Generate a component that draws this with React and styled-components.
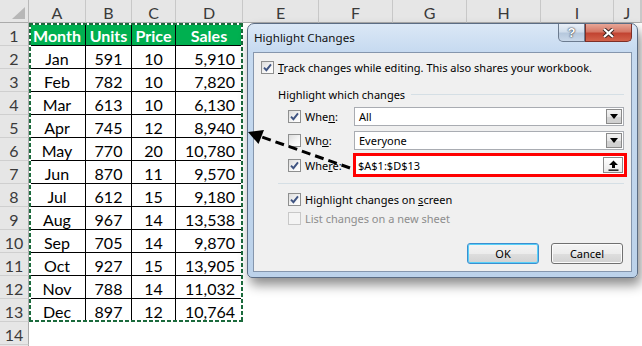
import React from "react";
import styled, { createGlobalStyle } from "styled-components";

const GlobalStyle = createGlobalStyle`
  html, body {
    margin: 0;
    padding: 0;
    background: #fff;
  }
  body {
    width: 642px;
    height: 346px;
    overflow: hidden;
    font-family: "Lato", "Liberation Sans", sans-serif;
  }
`;

const LETTERS = ["A", "B", "C", "D", "E", "F", "G", "H", "I", "J"];

const DATA = [
  ["Jan", "591", "10", "5,910"],
  ["Feb", "782", "10", "7,820"],
  ["Mar", "613", "10", "6,130"],
  ["Apr", "745", "12", "8,940"],
  ["May", "770", "20", "10,780"],
  ["Jun", "870", "11", "9,570"],
  ["Jul", "612", "15", "9,180"],
  ["Aug", "967", "14", "13,538"],
  ["Sep", "705", "14", "9,870"],
  ["Oct", "927", "15", "13,905"],
  ["Nov", "788", "14", "11,032"],
  ["Dec", "897", "12", "10,764"],
];

// ---------- spreadsheet ----------

const Sheet = styled.div`
  position: relative;
  display: grid;
  grid-template-columns: 29px 57px 46px 44px 67px 76px 74px 74px 74px 73px 1fr;
  grid-template-rows: repeat(16, 23px);
  width: 642px;
  height: 346px;
  overflow: hidden;
  background: #fff;
`;

const Corner = styled.div`
  grid-column: 1;
  grid-row: 1;
  display: flex;
  align-items: flex-end;
  justify-content: flex-end;
  padding: 0 3px 3px 0;
  background: #e6e6e6;
  border-right: 1px solid #b9b9b9;
  border-bottom: 1px solid #ababab;
  svg {
    display: block;
  }
`;

const ColHead = styled.div`
  grid-row: 1;
  display: flex;
  align-items: center;
  justify-content: center;
  padding-top: 2px;
  background: #e6e6e6;
  border-right: 1px solid #c8c8c8;
  border-bottom: 1px solid #ababab;
  color: #3a3a3a;
  font-size: 16px;
`;

const RowHead = styled.div`
  grid-column: 1;
  display: flex;
  align-items: center;
  justify-content: center;
  padding-top: 2px;
  background: #e6e6e6;
  border-right: 1px solid #ababab;
  border-bottom: 1px solid #cfcfcf;
  color: #3a3a3a;
  font-size: 16px;
`;

const DataRange = styled.div`
  grid-column: 2 / 6;
  grid-row: 2 / 15;
  position: relative;
  display: grid;
  grid-template-columns: 57px 46px 44px 67px;
  grid-template-rows: repeat(13, 23px);

  &::after {
    content: "";
    position: absolute;
    inset: 0;
    pointer-events: none;
    background:
      repeating-linear-gradient(90deg, #1b6a3c 0 4px, #fff 4px 6px) top / 100% 2px no-repeat,
      repeating-linear-gradient(90deg, #1b6a3c 0 4px, #fff 4px 6px) bottom / 100% 2px no-repeat,
      repeating-linear-gradient(180deg, #1b6a3c 0 4px, #fff 4px 6px) left / 2px 100% no-repeat,
      repeating-linear-gradient(180deg, #1b6a3c 0 4px, #fff 4px 6px) right / 2px 100% no-repeat;
  }
`;

const Cell = styled.div`
  display: flex;
  align-items: center;
  justify-content: ${({ $right }) => ($right ? "flex-end" : "center")};
  padding: 2px ${({ $right }) => ($right ? "7px" : "0")} 0 0;
  border-right: 1px solid #000;
  border-bottom: 1px solid #000;
  background: ${({ $head }) => ($head ? "#00b050" : "#fff")};
  color: ${({ $head }) => ($head ? "#fff" : "#000")};
  font-weight: ${({ $head }) => ($head ? 700 : 400)};
  font-size: 16px;
`;

// ---------- dialog ----------

const Dialog = styled.div`
  position: absolute;
  left: 247px;
  top: 23px;
  width: 391px;
  height: 255px;
  box-sizing: border-box;
  display: flex;
  flex-direction: column;
  padding: 0 5px 5px;
  border: 1px solid #5b6c83;
  border-radius: 7px 7px 5px 5px;
  background: linear-gradient(180deg, #dbe8f6 0, #c6daf0 28px, #bcd2ea 100%);
  box-shadow: 3px 7px 12px rgba(0, 0, 0, 0.45);
  font-family: "Noto Sans", "Liberation Sans", sans-serif;
  font-size: 11px;
  color: #000;
`;

const TitleBar = styled.div`
  height: 28px;
  display: flex;
  align-items: flex-start;
`;

const Title = styled.div`
  flex: 1;
  padding: 6px 0 0 1px;
  font-size: 11.6px;
  color: #111;
`;

const CapButton = styled.div`
  width: ${({ $w }) => $w}px;
  height: 18px;
  box-sizing: border-box;
  display: flex;
  align-items: center;
  justify-content: center;
  border: 1px solid ${({ $close }) => ($close ? "#7e2f27" : "#6c7b8f")};
  border-top: none;
  border-radius: ${({ $close }) => ($close ? "0 0 5px 0" : "0 0 0 5px")};
  background: ${({ $close }) =>
    $close
      ? "linear-gradient(180deg, #e8a697 0, #d57866 45%, #c24432 55%, #d3624a 100%)"
      : "linear-gradient(180deg, #e9eff7 0, #d1deec 45%, #b6c8dd 55%, #c9d8e9 100%)"};
  color: #fff;
  font-family: "Liberation Sans", sans-serif;
  font-weight: 700;
  font-size: 13px;
  text-shadow: 0 0 2px #2b3440, 0 0 1px #2b3440;
`;

const Panel = styled.div`
  flex: 1;
  display: flex;
  flex-direction: column;
  background: #f0f0f0;
  border: 1px solid #8596ad;
  padding: 0 7px 0 7px;
`;

const Row = styled.div`
  display: flex;
  align-items: center;
  height: ${({ $h }) => $h || 16}px;
  margin-top: ${({ $mt }) => $mt || 0}px;
  padding-left: ${({ $indent }) => $indent || 0}px;
  gap: 4px;
  color: ${({ $disabled }) => ($disabled ? "#8d8d8d" : "#000")};
  white-space: nowrap;
`;

const Box = styled.span`
  width: 13px;
  height: 13px;
  box-sizing: border-box;
  flex: none;
  display: flex;
  align-items: center;
  justify-content: center;
  border: 1px solid ${({ $disabled }) => ($disabled ? "#c8c8c8" : "#8e8f8f")};
  background: ${({ $disabled }) =>
    $disabled ? "#f4f4f4" : "linear-gradient(135deg, #dcdcdc 0, #f6f6f6 60%, #fff 100%)"};
`;

const GroupLabel = styled.div`
  display: flex;
  align-items: center;
  height: 16px;
  margin-top: 11px;
  padding-left: 17px;
  gap: 6px;
  &::after {
    content: "";
    flex: 1;
    height: 1px;
    background: #d5dfe5;
  }
`;

const Label = styled.span`
  width: 45px;
  flex: none;
`;

const Field = styled.div`
  flex: 1;
  display: flex;
  align-items: center;
  height: ${({ $red }) => ($red ? 24 : 19)}px;
  box-sizing: border-box;
  margin: 0 ${({ $red }) => ($red ? -3 : 0)}px 0 ${({ $red }) => ($red ? -1 : 0)}px;
  padding: 0 1px 0 ${({ $red }) => ($red ? 2 : 4)}px;
  border: ${({ $red }) => ($red ? "3px solid #ff0000" : "1px solid #a9acb2")};
  background: #fff;
`;

const FieldText = styled.span`
  flex: 1;
`;

const DropBtn = styled.span`
  width: 16px;
  height: 15px;
  box-sizing: border-box;
  display: flex;
  align-items: center;
  justify-content: center;
  border: 1px solid #8a8a8a;
  background: linear-gradient(180deg, #f3f3f3 0, #e6e6e6 50%, #d4d4d4 51%, #cfcfcf 100%);
  &::before {
    content: "";
    border-left: 4px solid transparent;
    border-right: 4px solid transparent;
    border-top: 5px solid #000;
  }
`;

const RefBtn = styled.span`
  width: 20px;
  height: 16px;
  box-sizing: border-box;
  display: flex;
  align-items: center;
  justify-content: center;
  border: 1px solid #8a8a8a;
  background: linear-gradient(180deg, #ffffff 0, #f4f4f4 50%, #e8e8e8 100%);
`;

const Separator = styled.div`
  height: 1px;
  margin: 6px 0 0 17px;
  background: #d5dfe5;
`;

const ButtonRow = styled.div`
  display: flex;
  justify-content: flex-end;
  gap: 12px;
  margin-top: 17px;
  padding-right: 1px;
`;

const Button = styled.div`
  width: 72px;
  height: 21px;
  box-sizing: border-box;
  display: flex;
  align-items: center;
  justify-content: center;
  border: 1px solid ${({ $default }) => ($default ? "#3c8fd0" : "#707070")};
  border-radius: 3px;
  box-shadow: ${({ $default }) => ($default ? "inset 0 0 0 1px #58d0f8" : "inset 0 0 0 1px #fbfbfb")};
  background: linear-gradient(180deg, #f4f4f4 0, #ececec 50%, #dedede 51%, #d2d2d2 100%);
`;

const U = styled.span`
  text-decoration: underline;
  text-underline-offset: 1px;
`;

const ArrowLayer = styled.svg`
  position: absolute;
  left: 0;
  top: 0;
  pointer-events: none;
`;

const Check = () => (
  <svg width="9" height="9" viewBox="0 0 9 9">
    <path d="M1 4.6 L3.4 7.2 L8 1.3" fill="none" stroke="#3f5482" strokeWidth="1.9" />
  </svg>
);

const CheckBox = ({ checked, disabled }) => (
  <Box $disabled={disabled}>{checked && <Check />}</Box>
);

export default function App() {
  return (
    <>
      <GlobalStyle />
      <Sheet>
        <Corner>
          <svg width="13" height="12" viewBox="0 0 13 12">
            <polygon points="13,0 13,12 0,12" fill="#b7b7b7" />
          </svg>
        </Corner>
        {LETTERS.map((l) => (
          <ColHead key={l}>{l}</ColHead>
        ))}
        <ColHead />
        {Array.from({ length: 14 }, (_, i) => (
          <RowHead key={i} style={{ gridRow: i + 2 }}>
            {i + 1}
          </RowHead>
        ))}
        <RowHead style={{ gridRow: 16 }} />
        <DataRange>
          <Cell $head>Month</Cell>
          <Cell $head>Units</Cell>
          <Cell $head>Price</Cell>
          <Cell $head>Sales</Cell>
          {DATA.map((r) => (
            <React.Fragment key={r[0]}>
              <Cell>{r[0]}</Cell>
              <Cell>{r[1]}</Cell>
              <Cell>{r[2]}</Cell>
              <Cell $right>{r[3]}</Cell>
            </React.Fragment>
          ))}
        </DataRange>

        <Dialog>
          <TitleBar>
            <Title>Highlight Changes</Title>
            <CapButton $w={27}>?</CapButton>
            <CapButton $w={47} $close>
              <svg width="13" height="10" viewBox="0 0 13 10">
                <path d="M2 1 L11 9 M11 1 L2 9" stroke="#3b2320" strokeWidth="4" />
                <path d="M2 1 L11 9 M11 1 L2 9" stroke="#fff" strokeWidth="2.2" />
              </svg>
            </CapButton>
          </TitleBar>
          <Panel>
            <Row $mt={6}>
              <CheckBox checked />
              <span>
                <U>T</U>rack changes while editing. This also shares your workbook.
              </span>
            </Row>
            <GroupLabel>Highlight which changes</GroupLabel>
            <Row $mt={5} $h={19} $indent={27}>
              <CheckBox checked />
              <Label>
                Whe<U>n</U>:
              </Label>
              <Field>
                <FieldText>All</FieldText>
                <DropBtn />
              </Field>
            </Row>
            <Row $mt={5} $h={19} $indent={27}>
              <CheckBox />
              <Label>
                Wh<U>o</U>:
              </Label>
              <Field>
                <FieldText>Everyone</FieldText>
                <DropBtn />
              </Field>
            </Row>
            <Row $mt={3} $h={24} $indent={27}>
              <CheckBox checked />
              <Label>
                Whe<U>r</U>e:
              </Label>
              <Field $red>
                <FieldText>$A$1:$D$13</FieldText>
                <RefBtn>
                  <svg width="11" height="11" viewBox="0 0 11 11">
                    <polygon points="5.5,0.5 1,5 4,5 4,8 7,8 7,5 10,5" fill="#000" />
                    <rect x="0.5" y="9.5" width="10" height="1.3" fill="#000" />
                  </svg>
                </RefBtn>
              </Field>
            </Row>
            <Separator />
            <Row $mt={7} $indent={27}>
              <CheckBox checked />
              <span>
                Highlight changes on <U>s</U>creen
              </span>
            </Row>
            <Row $mt={3} $indent={27} $disabled>
              <CheckBox disabled />
              <span>List changes on a new sheet</span>
            </Row>
            <ButtonRow>
              <Button $default>OK</Button>
              <Button>Cancel</Button>
            </ButtonRow>
          </Panel>
        </Dialog>

        <ArrowLayer width="642" height="346" viewBox="0 0 642 346">
          <line
            x1="350"
            y1="168"
            x2="261"
            y2="136.7"
            stroke="#000"
            strokeWidth="3"
            strokeDasharray="9 5"
          />
          <polygon points="248,132 264,130 258.5,144" fill="#000" />
        </ArrowLayer>
      </Sheet>
    </>
  );
}
